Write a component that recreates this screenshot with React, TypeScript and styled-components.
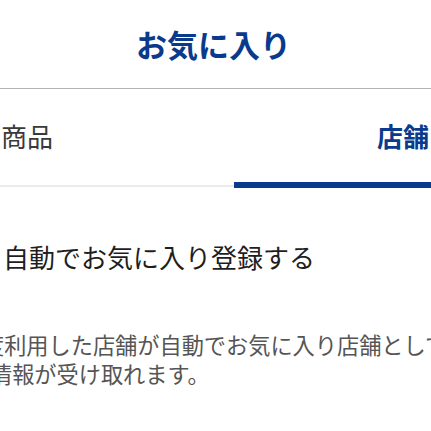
import { createGlobalStyle, styled } from 'styled-components';

const brand = '#0a3a8c';

const GlobalStyle = createGlobalStyle`
  html, body {
    margin: 0;
    padding: 0;
    background: #fff;
  }
  body {
    width: 431px;
    overflow: hidden;
    font-family: 'Noto Sans CJK JP', 'Noto Sans', sans-serif;
  }
`;

const Screen = styled.div`
  width: 431px;
  height: 431px;
  overflow: hidden;
  display: flex;
  flex-direction: column;
`;

const Header = styled.header`
  height: 88px;
  display: flex;
  align-items: center;
  justify-content: center;
  border-bottom: 1px solid #b4b4b4;
`;

const Title = styled.h1`
  margin: 0 0 2px -4px;
  font-size: 31px;
  line-height: 1;
  font-weight: 700;
  color: ${brand};
`;

const Tabs = styled.nav`
  display: flex;
  flex-direction: column;
`;

const TabLabels = styled.div`
  height: 93px;
  padding-top: 1px;
  box-sizing: border-box;
  display: flex;
  align-items: center;
  justify-content: space-between;
  padding-left: 1px;
  padding-right: 2px;
`;

const TabLabel = styled.span<{ $active?: boolean }>`
  font-size: 26px;
  line-height: 1;
  font-weight: ${(p) => (p.$active ? 700 : 400)};
  color: ${(p) => (p.$active ? brand : '#3a3a3a')};
`;

const Indicator = styled.div`
  height: 6px;
  display: flex;
  align-items: flex-end;
`;

const Track = styled.div`
  width: 234px;
  height: 2px;
  margin-bottom: 1px;
  background: #ebebeb;
`;

const ActiveBar = styled.div`
  flex: 1;
  height: 6px;
  background: ${brand};
`;

const Setting = styled.section`
  padding: 54px 0 0 3px;
`;

const SettingLabel = styled.div`
  font-size: 26px;
  line-height: 30px;
  color: #1e1e1e;
  white-space: nowrap;
`;

const Description = styled.p`
  margin: 58px 0 0;
  font-size: 22.2px;
  line-height: 29px;
  color: #555;
`;

const Line = styled.span<{ $shift: number }>`
  display: block;
  white-space: nowrap;
  margin-left: ${(p) => p.$shift}px;
`;

export default function App() {
  return (
    <Screen>
      <GlobalStyle />
      <Header>
        <Title>お気に入り</Title>
      </Header>
      <Tabs>
        <TabLabels>
          <TabLabel>商品</TabLabel>
          <TabLabel $active>店舗</TabLabel>
        </TabLabels>
        <Indicator>
          <Track />
          <ActiveBar />
        </Indicator>
      </Tabs>
      <Setting>
        <SettingLabel>自動でお気に入り登録する</SettingLabel>
        <Description>
          <Line $shift={-21}>度利用した店舗が自動でお気に入り店舗として登録され、お得な</Line>
          <Line $shift={-13}>情報が受け取れます。</Line>
        </Description>
      </Setting>
    </Screen>
  );
}
